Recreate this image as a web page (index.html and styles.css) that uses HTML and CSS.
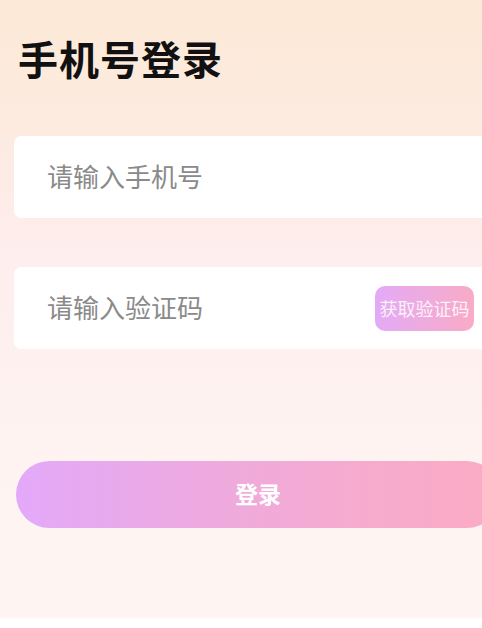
FILE: index.html
```html
<!DOCTYPE html>
<html lang="zh">
<head>
<meta charset="utf-8">
<title>手机号登录</title>
<link rel="stylesheet" href="styles.css">
</head>
<body>
<div class="page">
  <h1 class="title">手机号登录</h1>
  <div class="field field-phone">
    <input class="input" type="tel" placeholder="请输入手机号">
  </div>
  <div class="field field-code">
    <input class="input" type="text" placeholder="请输入验证码">
    <button class="code-btn" type="button">获取验证码</button>
  </div>
  <button class="login-btn" type="button">登录</button>
</div>
</body>
</html>
```
FILE: styles.css
```css
html, body {
  margin: 0;
  padding: 0;
  background: #ffffff;
  overflow: hidden;
}
body {
  width: 482px;
  font-family: "Noto Sans CJK SC", "Noto Sans", sans-serif;
}
.page {
  height: 618px;
  width: 520px;
  background: linear-gradient(180deg, #fce9d6 0%, #fdece6 30%, #feeeee 45%, #fef3f1 70%, #fef5f3 100%);
  padding: 38px 0 0 0;
  box-sizing: border-box;
  display: flex;
  flex-direction: column;
  align-items: flex-start;
}
.title {
  margin: 0 0 0 18px;
  font-size: 40px;
  line-height: 40px;
  font-weight: 700;
  color: #111111;
  letter-spacing: 1px;
}
.field {
  margin-left: 14px;
  width: 478px;
  height: 82px;
  background: #ffffff;
  border-radius: 7px;
  box-sizing: border-box;
  display: flex;
  align-items: center;
  padding: 0 18px 3px 33px;
}
.field-phone {
  margin-top: 58px;
}
.field-code {
  margin-top: 49px;
}
.input {
  flex: 1;
  min-width: 0;
  border: none;
  outline: none;
  background: transparent;
  font-family: "Noto Sans CJK SC", sans-serif;
  font-size: 26px;
  color: #333333;
  padding: 0;
}
.input::placeholder {
  color: #8a8a8a;
}
.code-btn {
  width: 99px;
  height: 45px;
  margin-top: 3px;
  border: none;
  border-radius: 10px;
  background: linear-gradient(90deg, #e3aaf6 0%, #efabdc 55%, #f9abc6 100%);
  color: rgba(255, 255, 255, 0.85);
  font-family: "Noto Sans CJK SC", sans-serif;
  font-size: 18px;
  padding: 0;
  white-space: nowrap;
}
.login-btn {
  margin: 112px 0 0 16px;
  width: 484px;
  height: 67px;
  border: none;
  border-radius: 34px;
  background: linear-gradient(90deg, #e3a9fa 0%, #eeaadf 40%, #f6abcf 70%, #fbabc3 100%);
  color: #ffffff;
  font-family: "Noto Sans CJK SC", sans-serif;
  font-size: 23px;
  font-weight: 700;
  padding: 0 0 3px 0;
}
```
